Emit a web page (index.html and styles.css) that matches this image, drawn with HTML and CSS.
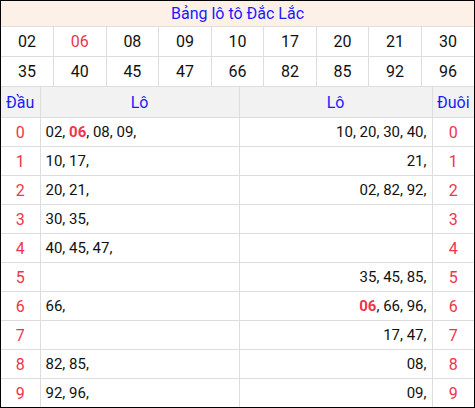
FILE: index.html
```html
<!DOCTYPE html>
<html lang="vi">
<head>
    <meta charset="UTF-8">
    <title>Bảng lô tô Đắc Lắc</title>
    <link rel="stylesheet" href="styles.css">
</head>
<body>
    <div class="board">
        <table class="numbers">
            <tr><th colspan="9" class="title">Bảng lô tô Đắc Lắc</th></tr>
            <tr>
                <td>02</td><td class="hit">06</td><td>08</td><td>09</td><td>10</td><td>17</td><td>20</td><td>21</td><td>30</td>
            </tr>
            <tr>
                <td>35</td><td>40</td><td>45</td><td>47</td><td>66</td><td>82</td><td>85</td><td>92</td><td>96</td>
            </tr>
        </table>
        <table class="loto">
            <colgroup>
                <col class="c-digit"><col class="c-head"><col class="c-tail"><col>
            </colgroup>
            <thead>
                <tr><th>Đầu</th><th>Lô</th><th>Lô</th><th>Đuôi</th></tr>
            </thead>
            <tbody>
                <tr><td class="digit">0</td><td class="left">02, <b class="hit">06</b>, 08, 09,</td><td class="right">10, 20, 30, 40,</td><td class="digit">0</td></tr>
                <tr><td class="digit">1</td><td class="left">10, 17,</td><td class="right">21,</td><td class="digit">1</td></tr>
                <tr><td class="digit">2</td><td class="left">20, 21,</td><td class="right">02, 82, 92,</td><td class="digit">2</td></tr>
                <tr><td class="digit">3</td><td class="left">30, 35,</td><td class="right"></td><td class="digit">3</td></tr>
                <tr><td class="digit">4</td><td class="left">40, 45, 47,</td><td class="right"></td><td class="digit">4</td></tr>
                <tr><td class="digit">5</td><td class="left"></td><td class="right">35, 45, 85,</td><td class="digit">5</td></tr>
                <tr><td class="digit">6</td><td class="left">66,</td><td class="right"><b class="hit">06</b>, 66, 96,</td><td class="digit">6</td></tr>
                <tr><td class="digit">7</td><td class="left"></td><td class="right">17, 47,</td><td class="digit">7</td></tr>
                <tr><td class="digit">8</td><td class="left">82, 85,</td><td class="right">08,</td><td class="digit">8</td></tr>
                <tr><td class="digit">9</td><td class="left">92, 96,</td><td class="right">09,</td><td class="digit">9</td></tr>
            </tbody>
        </table>
    </div>
</body>
</html>
```

FILE: styles.css
```css
body {
    margin: 0;
    font-family: Roboto, "Liberation Sans", sans-serif;
    background-color: white;
}
.board {
    width: 475px;
    height: 408px;
    box-sizing: border-box;
    border: 1px solid #000;
    overflow: hidden;
}
table {
    width: 100%;
    border-collapse: collapse;
    table-layout: fixed;
}
.numbers td {
    height: 29px;
    padding: 0;
    text-align: center;
    font-size: 16px;
    color: #111;
    border: 1px solid #ddd;
    border-top: none;
}
.numbers td:first-child {
    border-left: none;
}
.numbers td:last-child {
    border-right: none;
}
.numbers td.hit {
    color: #f0344c;
}
.title {
    height: 25px;
    padding: 0;
    font-weight: normal;
    font-size: 16px;
    color: #1a1aff;
    background-color: #fdf1e7;
    border-bottom: 1px solid #ddd;
}
.hit {
    color: #f0344c;
}
b.hit {
    font-weight: bold;
}
.c-digit {
    width: 39px;
}
.c-head {
    width: 199px;
}
.c-tail {
    width: 193px;
}
.loto th {
    height: 30px;
    padding: 0;
    font-weight: normal;
    font-size: 16px;
    color: #1a1aff;
    background-color: #f2f2f2;
    border: 1px solid #ddd;
    border-top: none;
}
.loto td {
    height: 28px;
    padding: 0 5px;
    font-size: 15px;
    color: #111;
    border: 1px solid #ddd;
    white-space: nowrap;
}
.loto tr > :first-child {
    border-left: none;
}
.loto tr > :last-child {
    border-right: none;
}
.loto tbody tr:last-child td {
    border-bottom: none;
}
.loto td.digit {
    padding: 0;
    text-align: center;
    color: #f0344c;
    font-size: 16px;
}
.left {
    text-align: left;
}
.right {
    text-align: right;
}
```
